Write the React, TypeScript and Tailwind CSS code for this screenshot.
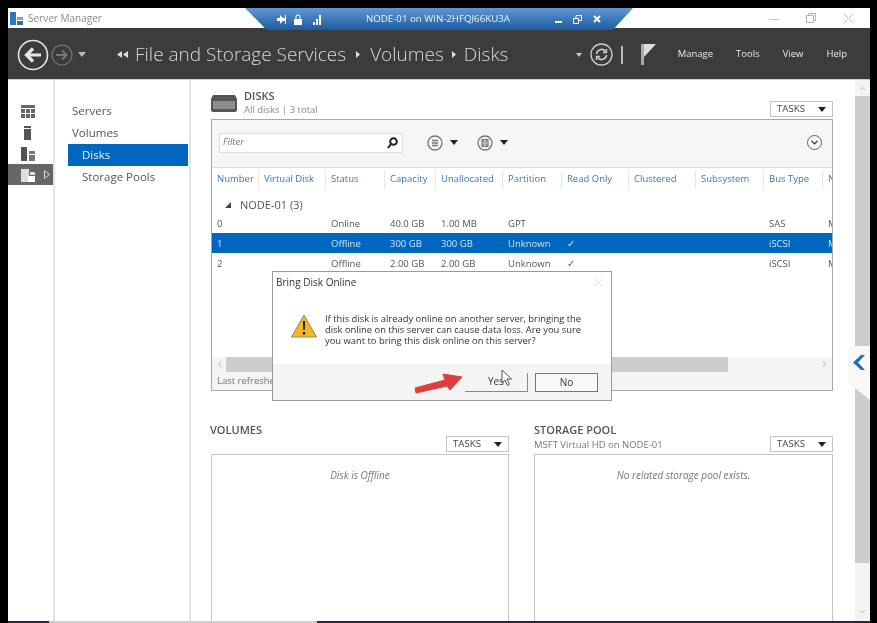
import { ChevronDown, ChevronLeft, ChevronRight, ChevronUp } from "lucide-react"

const columns = [
  { name: "Number", width: "w-[41px]" },
  { name: "Virtual Disk", width: "w-[67px]" },
  { name: "Status", width: "w-[59px]" },
  { name: "Capacity", width: "w-[51px]" },
  { name: "Unallocated", width: "w-[67px]" },
  { name: "Partition", width: "w-[59px]" },
  { name: "Read Only", width: "w-[67px]" },
  { name: "Clustered", width: "w-[67px]" },
  { name: "Subsystem", width: "w-[68px]" },
  { name: "Bus Type", width: "w-[59px]" },
  { name: "N", width: "w-[40px]" },
]

const rows = [
  ["0", "", "Online", "40.0 GB", "1.00 MB", "GPT", "", "", "", "SAS", "M"],
  ["1", "", "Offline", "300 GB", "300 GB", "Unknown", "✓", "", "", "iSCSI", "M"],
  ["2", "", "Offline", "2.00 GB", "2.00 GB", "Unknown", "✓", "", "", "iSCSI", "M"],
]

function TasksButton() {
  return (
    <div className="flex h-[16px] w-[63px] items-center justify-between border border-[#c4c4c4] bg-white pl-[6px] pr-[6px] text-[9.7px] text-[#444]">
      <span>TASKS</span>
      <Caret />
    </div>
  )
}

function Caret({ color = "border-t-[#222]" }: { color?: string }) {
  return <span className={`block h-0 w-0 border-x-[4.5px] border-t-[5px] border-x-transparent ${color}`} />
}

function CircleIcon({ glyph }: { glyph: "list" | "save" }) {
  return (
    <svg width="16" height="16" viewBox="0 0 16 16" fill="none" stroke="#777">
      <circle cx="8" cy="8" r="7" strokeWidth="1.3" />
      {glyph === "list" ? (
        <path d="M5 5.500h6M5 8h6M5 10.500h6" strokeWidth="1.300" />
      ) : (
        <path d="M5 4.500h6v7H5zM6.500 4.500v2.500h3V4.500M6.500 11.500V9h3v2.500" strokeWidth="1.200" />
      )}
    </svg>
  )
}

function SideIcon({ kind }: { kind: number }) {
  if (kind === 0) {
    return (
      <svg width="14" height="13" viewBox="0 0 14 13" fill="#666">
        <path d="M0 0h14v3H0zM0 4h4v4H0zM5 4h4v4H5zM10 4h4v4h-4zM0 9h4v4H0zM5 9h4v4H5zM10 9h4v4h-4z" />
      </svg>
    )
  }
  if (kind === 1) {
    return (
      <svg width="7" height="14" viewBox="0 0 7 14" fill="#555" className="ml-[3px]">
        <path d="M0 0h7v2H0zM0 3h7v11H0z" />
      </svg>
    )
  }
  if (kind === 2) {
    return (
      <svg width="14" height="14" viewBox="0 0 14 14" fill="#555">
        <path d="M0 0h6v14H0z" />
        <path d="M8 4h6v3H8zM8 8h6v6H8z" fill="#777" />
      </svg>
    )
  }
  return (
    <svg width="14" height="14" viewBox="0 0 14 14" fill="#ddd">
      <path d="M0 1h8v13H0z" />
      <path d="M9 4h5v3H9z" />
      <path d="M7 8h7v6H7z" fill="#fff" />
    </svg>
  )
}

function App() {
  return (
    <div className="relative h-[623px] w-[877px] overflow-hidden bg-black font-['Open_Sans','Noto_Sans',sans-serif] text-[#444] blur-[0.35px]">
      <div className="ml-2 flex h-[623px] w-[862px] flex-col pt-2">
        {/* window title */}
        <div className="flex h-[20px] shrink-0 items-center bg-white pl-[2px]">
          <svg width="13" height="13" viewBox="0 0 13 13" className="mr-[5px]">
            <path d="M0 0h6v13H0z" fill="#2f78bd" />
            <path d="M7 5h6v3H7z" fill="#7aa7cf" />
            <path d="M7 9h6v4H7z" fill="#3c6f9e" />
          </svg>
          <span className="text-[10px] text-[#8a8a8a]">Server Manager</span>
          <div className="ml-auto flex items-center gap-[27px] pr-[16px] text-[#b5b5b5]">
            <span className="mt-[2px] h-px w-[10px] bg-[#c8c8c8]" />
            <svg width="10" height="10" viewBox="0 0 10 10" fill="none" stroke="#b0b0b0">
              <path d="M.5 2.500h7v7h-7zM2.500 2.500v-2h7v7h-2" />
            </svg>
            <svg width="11" height="11" viewBox="0 0 11 11" fill="none" stroke="#c0c0c0">
              <path d="M.5.5l10 10M10.500.5l-10 10" />
            </svg>
          </div>
        </div>

        {/* breadcrumb bar */}
        <div className="flex h-[52px] shrink-0 items-center border-b border-[#cfcfcf] bg-[#3c3c3c] pl-[9px] pt-[2px] text-white">
          <svg width="32" height="32" viewBox="0 0 32 32" fill="none" className="mr-[2px]">
            <circle cx="16" cy="16" r="14.500" stroke="#e8e8e8" strokeWidth="1.600" />
            <path d="M24 16H10M16 9.500L9.500 16l6.500 6.500" stroke="#e8e8e8" strokeWidth="3.200" />
          </svg>
          <svg width="22" height="22" viewBox="0 0 22 22" fill="none">
            <circle cx="11" cy="11" r="10" stroke="#777" strokeWidth="1.200" />
            <path d="M5 11h10M11 6.500l4.500 4.500-4.500 4.500" stroke="#777" strokeWidth="2" />
          </svg>
          <span className="ml-[5px] mr-[31px]">
            <Caret color="border-t-[#bbb]" />
          </span>
          <svg width="11" height="7" viewBox="0 0 11 7" fill="#ddd" className="mr-[7px]">
            <path d="M5 0v7L0 3.500zM11 0v7L6 3.500z" />
          </svg>
          <div className="flex items-center text-[19px] font-light text-[#d8d8d8]">
            <span>File and Storage Services</span>
            <svg width="4" height="7" viewBox="0 0 4 7" fill="#ddd" className="mx-[10px]">
              <path d="M0 0l4 3.500L0 7z" />
            </svg>
            <span>Volumes</span>
            <svg width="4" height="7" viewBox="0 0 4 7" fill="#ddd" className="mx-[8px]">
              <path d="M0 0l4 3.500L0 7z" />
            </svg>
            <span>Disks</span>
          </div>
          <div className="ml-auto flex items-center pr-[23px]">
            <span className="mr-[8px] block h-0 w-0 border-x-[3px] border-t-[4px] border-x-transparent border-t-[#ccc]" />
            <svg width="23" height="23" viewBox="0 0 23 23" fill="none" className="mr-[8px]">
              <circle cx="11.500" cy="11.500" r="10.500" stroke="#ccc" strokeWidth="1.300" />
              <path d="M6.500 11a5 5 0 0 1 9-2.500M16.500 12a5 5 0 0 1-9 2.500" stroke="#ccc" strokeWidth="1.600" />
              <path d="M16.500 6v3.500H13M6.500 17v-3.500H10" stroke="#ccc" strokeWidth="1.400" />
            </svg>
            <span className="mr-[18px] h-[18px] w-[2px] bg-[#bbb]" />
            <svg width="15" height="21" viewBox="0 0 15 21" className="mr-[22px]">
              <path d="M0 0h3v21H0z" fill="#aaa" />
              <path d="M3 0h12L3 13z" fill="#ddd" />
            </svg>
            <div className="flex gap-[23px] text-[9.5px] text-[#e8e8e8]">
              <span>Manage</span>
              <span>Tools</span>
              <span>View</span>
              <span>Help</span>
            </div>
          </div>
        </div>

        <div className="flex min-h-0 flex-1 bg-white">
          {/* icon rail */}
          <div className="flex w-[47px] shrink-0 flex-col border-r-2 border-[#e4e4e4] pt-[21px]">
            {[0, 1, 2].map((kind) => (
              <div key={kind} className="flex h-[21px] w-[45px] items-center pl-[13px]">
                <SideIcon kind={kind} />
              </div>
            ))}
            <div className="flex h-[21px] w-[45px] items-center gap-[9px] bg-[#666] pl-[13px]">
              <SideIcon kind={3} />
              <svg width="6" height="9" viewBox="0 0 6 9" fill="none" stroke="#ddd">
                <path d="M.5.5l5 4-5 4z" />
              </svg>
            </div>
          </div>

          {/* sub navigation */}
          <div className="w-[136px] shrink-0 border-r-2 border-[#e4e4e4] pl-[13px] pr-[1px] pt-[20px] text-[11.5px] text-[#555]">
            <div className="flex h-[22px] items-center pl-[4px]">Servers</div>
            <div className="flex h-[22px] items-center pl-[4px]">Volumes</div>
            <div className="flex h-[22px] items-center bg-[#0067c0] pl-[14px] text-[#e6f2ff]">Disks</div>
            <div className="flex h-[22px] items-center pl-[14px]">Storage Pools</div>
          </div>

          {/* content */}
          <div className="min-w-0 flex-1 overflow-hidden pl-[20px] pt-[8px]">
            <div className="flex h-[31px] w-[622px] items-start">
              <svg width="26" height="17" viewBox="0 0 26 17" className="mr-[7px] mt-[7px]">
                <path d="M2 0h22l2 4v11a2 2 0 0 1-2 2H2a2 2 0 0 1-2-2V4z" fill="#555" />
                <path d="M2 6h22v8H2z" fill="#8d8d8d" />
              </svg>
              <div className="flex flex-col">
                <span className="text-[11px] font-semibold leading-[15px] text-[#555]">DISKS</span>
                <span className="text-[9.5px] leading-[13px] text-[#888]">All disks | 3 total</span>
              </div>
              <div className="ml-auto mt-[13px]">
                <TasksButton />
              </div>
            </div>

            {/* disks table */}
            <div className="flex h-[272px] w-[622px] flex-col overflow-hidden border border-[#a8a8a8]">
              <div className="flex h-[48px] shrink-0 items-center border-b border-[#dcdcdc] bg-[#f6f6f6] pb-[2px] pl-[7px] pr-[10px]">
                <div className="flex h-[20px] w-[184px] items-center justify-between border border-[#dedede] bg-white pl-[3px] pr-[4px] text-[9.5px] italic text-[#777]">
                  <span>Filter</span>
                  <svg width="11" height="12" viewBox="0 0 11 12" fill="none" stroke="#222" strokeWidth="2">
                    <circle cx="6.500" cy="4.500" r="3.300" />
                    <path d="M4 7l-3 4" />
                  </svg>
                </div>
                <div className="ml-[24px] flex items-center gap-[7px]">
                  <CircleIcon glyph="list" />
                  <Caret />
                </div>
                <div className="ml-[19px] flex items-center gap-[7px]">
                  <CircleIcon glyph="save" />
                  <Caret />
                </div>
                <div className="ml-auto flex h-[15px] w-[15px] items-center justify-center rounded-full border border-[#666]">
                  <ChevronDown size={11} strokeWidth={3} className="text-[#333]" />
                </div>
              </div>

              <div className="min-h-0 flex-1 overflow-hidden">
                <div className="flex h-[21px] w-[660px] items-center pl-[5px] pt-[2px] text-[9.5px] text-[#3a78ad]">
                  {columns.map((col, i) => (
                    <div key={col.name} className={`${col.width} flex h-[18px] items-center ${i > 0 ? "border-l border-[#e6e6e6] pl-[5px]" : ""}`}>
                      {col.name}
                    </div>
                  ))}
                </div>
                <div className="flex h-[24px] items-center pl-[13px] pt-[8px] text-[11px] text-[#555]">
                  <svg width="6" height="6" viewBox="0 0 6 6" fill="#444" className="mr-[9px]">
                    <path d="M6 0v6H0z" />
                  </svg>
                  <span>NODE-01 (3)</span>
                </div>
                {rows.map((row, r) => (
                  <div
                    key={row[0]}
                    className={`flex h-[20px] w-[660px] items-center pl-[5px] pt-[2px] text-[9.5px] ${r === 1 ? "bg-[#0067c0] text-[#cfe6fb]" : "text-[#555]"}`}
                  >
                    {columns.map((col, i) => (
                      <div key={col.name} className={`${col.width} overflow-hidden whitespace-nowrap ${i > 0 ? "pl-[6px]" : ""}`}>
                        {row[i]}
                      </div>
                    ))}
                  </div>
                ))}
              </div>

              <div className="flex h-[15px] shrink-0 items-center bg-[#f4f4f4]">
                <ChevronLeft size={9} className="ml-[3px] mr-[2px] text-[#999]" />
                <div className="h-[15px] w-[502px] bg-[#cdcdcd]" />
                <ChevronRight size={9} className="ml-auto mr-[3px] text-[#999]" />
              </div>
              <div className="flex h-[18px] shrink-0 items-center bg-[#f4f4f4] pl-[5px] text-[9.5px] text-[#777]">Last refreshed</div>
            </div>

            {/* lower panels */}
            <div className="mt-[29px] flex w-[622px] gap-[25px]">
              <div className="w-[298px]">
                <div className="-ml-px flex h-[34px] items-start justify-between">
                  <span className="text-[11px] font-semibold leading-[20px] text-[#555]">VOLUMES</span>
                  <div className="mt-[16px]">
                    <TasksButton />
                  </div>
                </div>
                <div className="h-[190px] border border-[#c4c4c4] pt-[13px] text-center text-[10px] italic text-[#777]">Disk is Offline</div>
              </div>
              <div className="w-[299px]">
                <div className="flex h-[34px] items-start justify-between">
                  <div className="flex flex-col">
                    <span className="text-[11px] font-semibold leading-[20px] text-[#555]">STORAGE POOL</span>
                    <span className="text-[9.5px] leading-[10px] text-[#777]">MSFT Virtual HD on NODE-01</span>
                  </div>
                  <div className="mt-[16px]">
                    <TasksButton />
                  </div>
                </div>
                <div className="h-[190px] border border-[#c4c4c4] pt-[13px] text-center text-[10px] italic text-[#777]">No related storage pool exists.</div>
              </div>
            </div>
          </div>

          {/* page scrollbar */}
          <div className="flex w-[15px] shrink-0 flex-col bg-[#f4f4f4]">
            <div className="flex h-[16px] items-center justify-center">
              <ChevronUp size={9} className="text-[#aaa]" />
            </div>
            <div className="h-[467px] bg-[#cdcdcd]" />
            <div className="mt-auto flex h-[16px] items-center justify-center pb-[4px]">
              <ChevronDown size={9} className="text-[#aaa]" />
            </div>
          </div>
        </div>

        {/* taskbar edge showing under the window */}
        <div className="flex h-[2px] shrink-0">
          <div className="w-[41px] bg-[#1c2c3c]" />
          <div className="w-[268px] bg-[#cfcfcf]" />
          <div className="flex-1 bg-[#1c2c3c]" />
        </div>
      </div>

      {/* remote connection bar */}
      <div className="absolute left-[245px] top-[8px] flex h-[22px] w-[388px] items-center bg-gradient-to-b from-[#5f97d0] to-[#1c5ba3] pl-[32px] text-[9.7px] text-[#eaf3fc] [clip-path:polygon(0_0,100%_0,94.8%_100%,5.6%_100%)]">
        <svg width="46" height="11" viewBox="0 0 46 11" fill="#fff">
          <path d="M0 4h3V1l3 3h2V1h1v9H8V7H6l-3 3V7H0z" />
          <path d="M17 5h8v6h-8zM18.500 5V3a2.500 2.500 0 0 1 5 0v2h-1V3a1.500 1.500 0 0 0-3 0v2z" />
          <path d="M36 8h2v3h-2zM39 5h2v6h-2zM42 1h2v10h-2z" />
        </svg>
        <span className="ml-[43px]">NODE-01 on WIN-2HFQJ66KU3A</span>
        <div className="ml-[45px] flex items-center gap-[11px]">
          <span className="mt-[6px] h-[2px] w-[7px] bg-white" />
          <svg width="9" height="9" viewBox="0 0 9 9" fill="none" stroke="#fff">
            <path d="M.5 3.500h5v5h-5zM3 3.500v-3h5.500v5h-3" />
          </svg>
          <svg width="8" height="8" viewBox="0 0 8 8" fill="none" stroke="#fff" strokeWidth="2">
            <path d="M1 1l6 6M7 1L1 7" />
          </svg>
        </div>
      </div>

      {/* collapsed side tab */}
      <div className="absolute left-[848px] top-[346px] h-[54px] w-[22px] bg-[#f8f8f8] pl-[5px] pt-[9px] [clip-path:polygon(0_0,100%_0,100%_100%,0_67%)]">
        <svg width="12" height="15" viewBox="0 0 12 15" fill="#1f6fb2">
          <path d="M8 0h4L5 7.500l7 7.500H8L0 7.500z" />
        </svg>
      </div>

      {/* dialog */}
      <div className="absolute left-[272px] top-[271px] flex h-[130px] w-[340px] flex-col border border-[#9a9a9a] bg-white text-[#333]">
        <div className="flex h-[20px] shrink-0 items-center justify-between pl-[3px] pr-[8px] text-[10px]">
          <span>Bring Disk Online</span>
          <svg width="9" height="9" viewBox="0 0 9 9" fill="none" stroke="#ddd">
            <path d="M.5.5l8 8M8.500.5l-8 8" />
          </svg>
        </div>
        <div className="flex min-h-0 flex-1 pl-[18px] pt-[21px]">
          <svg width="26" height="24" viewBox="0 0 26 24" className="mr-[8px] mt-[1px] shrink-0">
            <path d="M13 1l12.500 22H.5z" fill="#f4b72a" stroke="#9a8a5a" />
            <path d="M11.800 7h2.400l-.5 9h-1.400zM11.800 18h2.400v2.500h-2.400z" fill="#222" />
          </svg>
          <p className="w-[270px] text-[9.4px] leading-[11px] text-[#333]">
            If this disk is already online on another server, bringing the disk online on this server can cause data loss. Are you sure you want to bring this disk online on this server?
          </p>
        </div>
        <div className="flex h-[36px] shrink-0 items-center justify-end gap-[7px] bg-[#f4f4f4] pr-[13px] text-[10px]">
          <div className="flex h-[19px] w-[63px] items-center justify-center border-b border-r border-[#888]">Yes</div>
          <div className="flex h-[19px] w-[63px] items-center justify-center border border-[#777] bg-[#f8f8f8]">No</div>
        </div>
      </div>

      {/* red arrow and mouse pointer */}
      <svg width="52" height="24" viewBox="0 0 52 24" className="absolute left-[414px] top-[372px]">
        <path d="M48 5L29 2l2 6L1 16l1 5 31-7 3 4z" fill="#e03c3c" stroke="#e03c3c" strokeLinejoin="round" />
      </svg>
      <svg width="12" height="18" viewBox="0 0 12 18" className="absolute left-[501px] top-[369px]">
        <path d="M1 1v13l3-3 2.500 5.500 2-1L6 10h4.500z" fill="#fff" stroke="#555" />
      </svg>
    </div>
  )
}

export default App
